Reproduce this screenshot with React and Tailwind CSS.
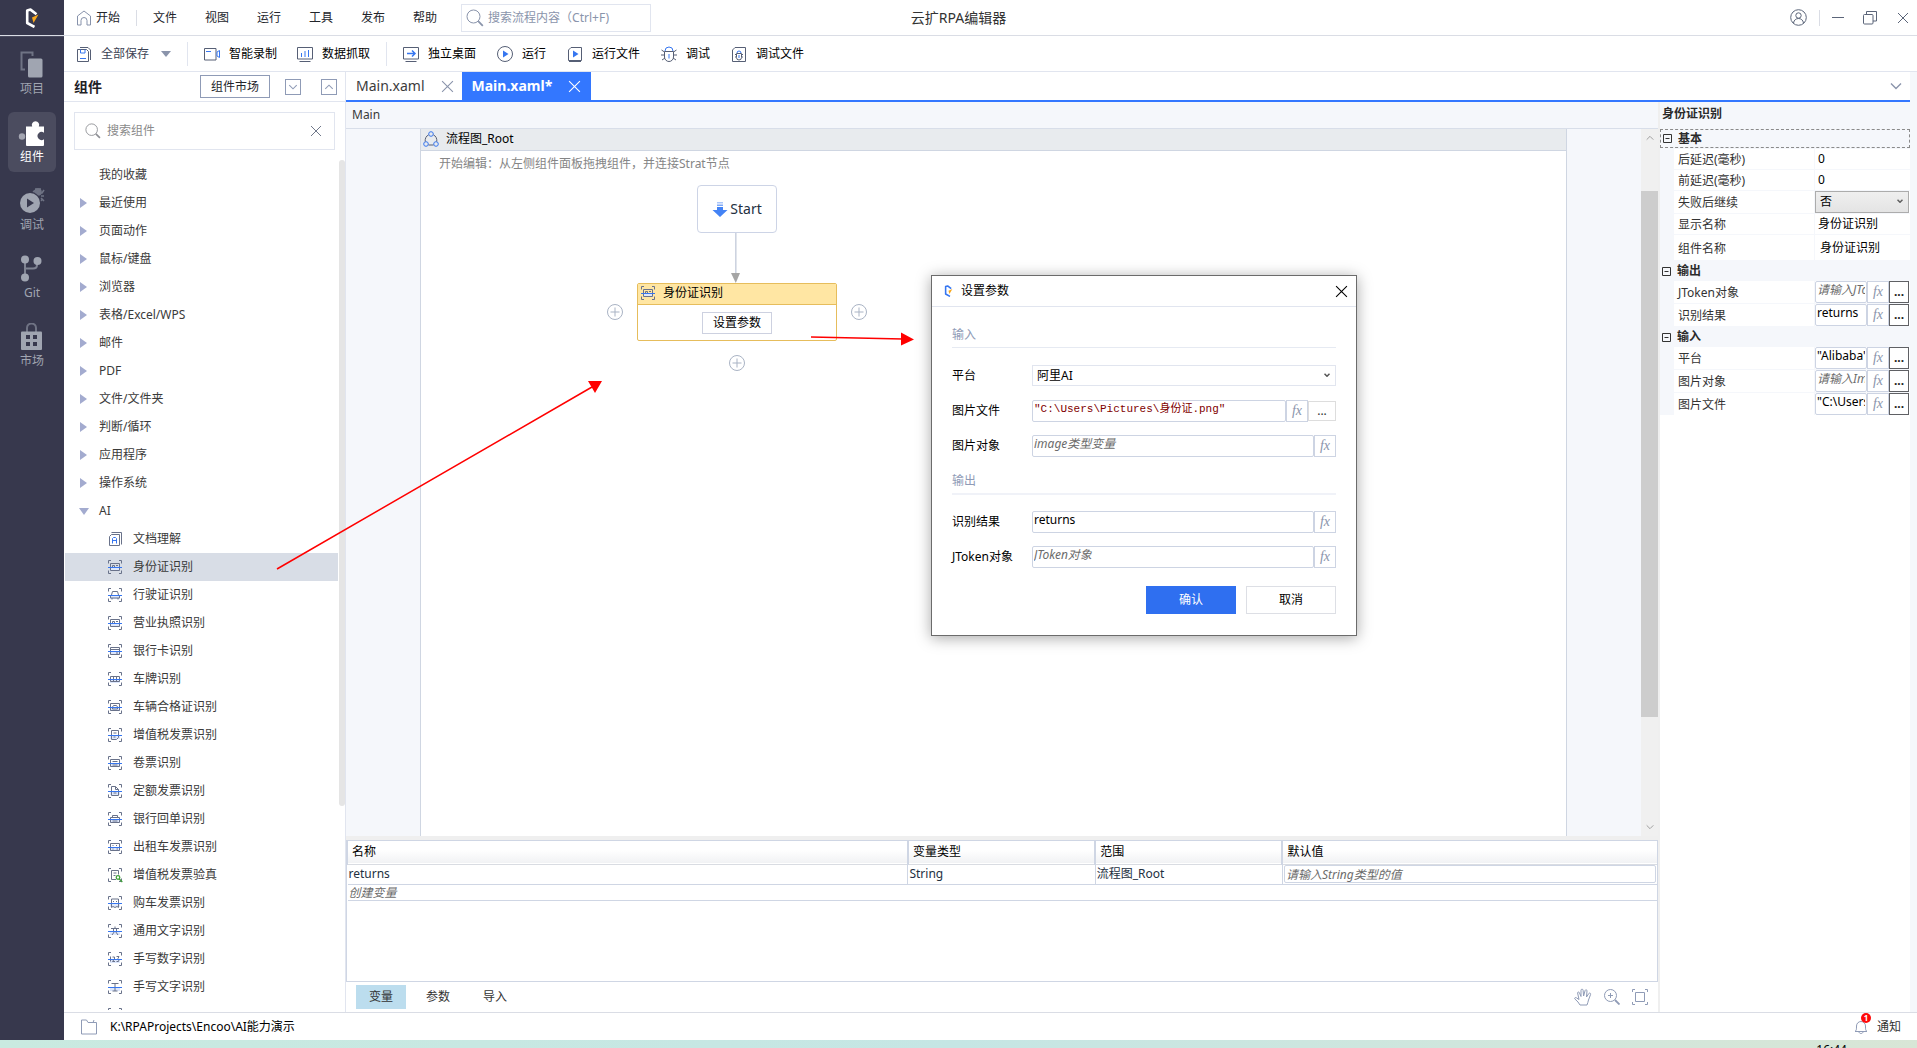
import { useState } from 'react'

const CATEGORIES = [
  { label: '我的收藏', leaf: true },
  { label: '最近使用' },
  { label: '页面动作' },
  { label: '鼠标/键盘' },
  { label: '浏览器' },
  { label: '表格/Excel/WPS' },
  { label: '邮件' },
  { label: 'PDF' },
  { label: '文件/文件夹' },
  { label: '判断/循环' },
  { label: '应用程序' },
  { label: '操作系统' },
  { label: 'AI', open: true },
]

const AI_ITEMS = [
  { label: '文档理解', icon: 'doc' },
  { label: '身份证识别', icon: 'card' },
  { label: '行驶证识别', icon: 'car' },
  { label: '营业执照识别', icon: 'card' },
  { label: '银行卡识别', icon: 'bank' },
  { label: '车牌识别', icon: 'plate' },
  { label: '车辆合格证识别', icon: 'cert' },
  { label: '增值税发票识别', icon: 'invoice' },
  { label: '卷票识别', icon: 'roll' },
  { label: '定额发票识别', icon: 'page' },
  { label: '银行回单识别', icon: 'receipt' },
  { label: '出租车发票识别', icon: 'taxi' },
  { label: '增值税发票验真', icon: 'verify' },
  { label: '购车发票识别', icon: 'ticket' },
  { label: '通用文字识别', icon: 'text' },
  { label: '手写数字识别', icon: 'digits' },
  { label: '手写文字识别', icon: 'hand' },
  { label: '', icon: 'page' },
]

const MENUS = ['文件', '视图', '运行', '工具', '发布', '帮助']

/* ---------- icons ---------- */

function Logo({ className, main, accent }) {
  return (
    <svg className={className} viewBox="0 0 14 20" fill="none">
      <path d="M9.500 19L2.200 15V2.500L5.500 1.600l6 4.600" stroke={main} strokeWidth="2.600" strokeLinejoin="round" />
      <path d="M13.500 6.500L7 9.600 8.500 15z" fill={accent} />
    </svg>
  )
}

function CloseIcon({ className, size = 12 }) {
  return (
    <svg className={className} width={size} height={size} viewBox="0 0 12 12" fill="none" stroke="currentColor">
      <path d="M1 1l10 10M11 1L1 11" />
    </svg>
  )
}

function Chevron({ className, up, bold }) {
  return (
    <svg className={className} viewBox="0 0 12 8" fill="none" stroke="currentColor" strokeWidth={bold ? 3 : 1.4}>
      <path d={up ? 'M1 6.5l5-5 5 5' : 'M1 1.5l5 5 5-5'} />
    </svg>
  )
}

function SearchIcon({ className }) {
  return (
    <svg className={className} viewBox="0 0 18 18" fill="none" stroke="currentColor">
      <circle cx="7.5" cy="7.5" r="6.5" />
      <path d="M12.2 12.2l4.6 4.6" strokeWidth="1.8" />
    </svg>
  )
}

const SCAN_SHAPES = {
  card: <path d="M3.500 4.500h9v7h-9zM5.500 8.500v-2h2v2M9 6.500h2" />,
  car: <path d="M3.500 8.500h9v2.500h-9zM4.500 8l1-3.500h5l1 3.500M5 11v1.500M11 11v1.500" />,
  bank: <path d="M3.500 4.500h9v7h-9zM3.500 6.500h9M9 10h2" />,
  plate: <path d="M3.500 5.500h9v5h-9zM6.500 5.500v5M9.500 5.500v5" />,
  cert: <path d="M3.500 4.500h9v7h-9zM5.500 10V8l1-1.500h3l1 1.500v2z" />,
  invoice: <path d="M4.500 3.500h7v7l-2 2h-5zM6.500 6h3M6.500 10h2" />,
  roll: <path d="M3.500 4.500h9v7h-9zM5.500 6.500h5M5.500 10h5" />,
  page: <path d="M4.500 3.500h4l3 3v6h-7zM8.500 3.500v3h3M6.500 10h3" />,
  receipt: <path d="M3.500 6.500h9v5h-9zM5.500 6.500v-2h5v2M5.500 10h5" />,
  taxi: <path d="M3.500 4.500h9v7h-9zM5.500 6.500h1M9 6.500h1M5.500 10h1M9.500 10h1.500" />,
  ticket: <path d="M4.500 4v8.500l1.500-1 2 1 2-1 1.500 1V4zM6 6.500h1M9 6.500h1" />,
  text: <path d="M4 5.500h8M8 3.500v2M6.500 6v2M9.500 6v2M5 12l2.500-3.500M11 12L8.500 8.500" />,
  digits: <path d="M3.500 5.500v5M5.500 6h2v2l-2 2.500h2.500M9.500 5.500h2.500L11 7.500l1 1-.5 2H9.500" />,
  hand: <path d="M4.500 4.500h7M8 4.500v7.500M5.500 12h5" />,
}

function ComponentIcon({ name, className = 'size-4' }) {
  if (name === 'doc') {
    return (
      <svg className={className} viewBox="0 0 16 16" fill="none">
        <path d="M4.500 1.500h10v12" stroke="#69728a" />
        <path d="M4.500 3.500h8v11h-10v-9z" stroke="#69728a" />
        <path d="M5.500 12.500V7.500l1-1h2l1 1v5M5.500 9.500h4" stroke="#3676f0" />
      </svg>
    )
  }
  return (
    <svg className={className} viewBox="0 0 16 16" fill="none" stroke="#69728a">
      <path d="M1.500 4.500v-3H4M12 1.500h2.500v3M14.500 11.500v3H12M4 14.500H1.500v-3" />
      {name === 'verify' ? (
        <>
          <path d="M9 12.500H4.500v-9h7v4M6.500 6h3M6.500 8.500h2" />
          <g stroke="#3fa13a" strokeWidth="1.300">
            <circle cx="11" cy="10.500" r="1.800" />
            <path d="M12.300 12l3 3" />
          </g>
        </>
      ) : (
        <>
          <rect x="3" y="9" width="10" height="3" fill="#dde7fc" stroke="none" />
          {SCAN_SHAPES[name]}
          <path d="M1 8.500h14" stroke="#3676f0" />
        </>
      )}
    </svg>
  )
}

const NAV = [
  {
    label: '项目',
    icon: (
      <>
        <path d="M6 18.500H2.500v-17h11V5" fill="none" stroke="#6f7384" strokeWidth="2" />
        <rect x="9" y="7.500" width="14.500" height="19" rx="1.500" fill="#a0a5b1" />
      </>
    ),
  },
  {
    label: '组件',
    active: true,
    icon: (
      <>
        <circle cx="3" cy="17.500" r="3.200" fill="#a3a5b1" />
        <path
          d="M7 7.500h6.200a3.700 3.700 0 1 1 6.600 0H25v6.300a4 4 0 1 0 0 6.400V26a1 1 0 0 1-1 1H8a1 1 0 0 1-1-1z"
          fill="#fff"
        />
      </>
    ),
  },
  {
    label: '调试',
    icon: (
      <>
        <g stroke="#6f7384" strokeWidth="1.600" fill="none">
          <path d="M14 5l3-2M25 3l-2 3h-3M25 14l-3-3M25 9h-3M16 2h6M21 14l2-1" />
          <circle cx="19" cy="5" r="3" fill="#6f7384" />
        </g>
        <circle cx="11" cy="16" r="11" fill="#37384d" />
        <circle cx="11" cy="16" r="10" fill="#a0a5b1" />
        <path d="M8 11.500v9l7-4.500z" fill="#37384d" />
      </>
    ),
  },
  {
    label: 'Git',
    icon: (
      <>
        <path d="M6 5v18M18 7v3c0 3-2 3.500-4 3.500H7" stroke="#7f8392" strokeWidth="2" fill="none" />
        <circle cx="6" cy="4.500" r="4" fill="#a0a5b1" />
        <circle cx="18.500" cy="6" r="4" fill="#a0a5b1" />
        <circle cx="6" cy="22.500" r="4" fill="#a0a5b1" />
      </>
    ),
  },
  {
    label: '市场',
    icon: (
      <>
        <path d="M8 9V5a4.500 4.500 0 0 1 9 0v4" stroke="#6f7384" strokeWidth="2" fill="none" />
        <rect x="2" y="8.500" width="21" height="18.500" rx="1" fill="#a0a5b1" />
        <path d="M7 12h4v4H7zM14 12h4v4h-4zM7 19h4v4H7zM14 19h4v4h-4z" fill="#37384d" />
      </>
    ),
  },
]

const TOOL_ICONS = {
  save: (
    <>
      <path d="M4 1.500h8l2.500 2.500v10" stroke="#565f75" />
      <path d="M1.500 3.500h9l2 2v10h-11z" stroke="#565f75" />
      <path d="M4.500 3.500v3.500h4.500V3.500M4 12.500h6" stroke="#3676f0" />
    </>
  ),
  record: (
    <>
      <path d="M.5 2.500h11.500v11.500H.5z" stroke="#565f75" />
      <path d="M2 5.500h5" stroke="#3676f0" />
      <path d="M13 6l2.500-1.500v7L13 10z" stroke="#3676f0" />
    </>
  ),
  data: (
    <>
      <path d="M.500 1.500h15v11.500H.500zM2.500 15.500h11" stroke="#565f75" />
      <path d="M4.500 7v4M8 5v6M11.500 4v7" stroke="#3676f0" />
    </>
  ),
  desktop: (
    <>
      <path d="M.500 1.500h15v11.500H.500zM2.500 15.500h11" stroke="#565f75" />
      <path d="M4 7.500h7.500M9 4.500l3 3-3 3" stroke="#3676f0" strokeWidth="1.500" />
    </>
  ),
  run: (
    <>
      <circle cx="8" cy="8" r="7.500" stroke="#565f75" />
      <path d="M6 4.500v7L11.500 8z" fill="#3676f0" />
    </>
  ),
  runFile: (
    <>
      <path d="M4 1.500h10.500v13h-13V4zM2 15.500h12" stroke="#565f75" />
      <path d="M6 4.500v7L11.500 8z" fill="#3676f0" />
    </>
  ),
  debug: (
    <>
      <path d="M3.500 5.500h9V11a4.500 4.500 0 0 1-9 0zM.500 4l3 2M15.500 4l-3 2M0 9h3.500M16 9h-3.500M1 14l3-2M15 14l-3-2" stroke="#565f75" />
      <path d="M4 5a4 4 0 0 1 8 0M8 8v4.500" stroke="#3676f0" />
    </>
  ),
  debugFile: (
    <>
      <path d="M4 1.500h10.500v14h-13V4zM5.500 7.500h5v4a2 2 0 0 1-5 0zM4 8.500h1M11 8.500h1M4 11h1M11 11h1" stroke="#565f75" />
      <path d="M6 7a2 2 0 0 1 4 0M8 9v3" stroke="#3676f0" />
    </>
  ),
}

function ToolButton({ icon, label, muted }) {
  return (
    <button className={`flex items-center gap-[9px] ${muted ? 'text-[#3b4254]' : 'text-black'}`}>
      <svg className="size-4" viewBox="0 0 16 16" fill="none">{TOOL_ICONS[icon]}</svg>
      {label}
    </button>
  )
}

/* ---------- shared fields ---------- */

function FxButton() {
  return (
    <button className="w-[22px] shrink-0 border border-[#cdd4e3] font-['Liberation_Serif',serif] text-sm leading-4 italic text-[#8a94ab]">
      fx
    </button>
  )
}

function ExprInput({ id, value, placeholder, code }) {
  return (
    <input
      id={id}
      defaultValue={value}
      placeholder={placeholder}
      className={`min-w-0 flex-1 rounded-xs border border-[#cdd4e3] bg-white px-px pb-1 outline-none placeholder:italic placeholder:text-[#6b6b6b] ${
        code ? "font-['Liberation_Mono','Noto_Sans_CJK_SC',monospace] text-[11px] text-[#7f0000]" : 'text-xs text-black'
      }`}
    />
  )
}

/* ---------- chrome ---------- */

function TitleBar() {
  return (
    <header className="grid h-9 shrink-0 grid-cols-[1fr_auto_1fr] items-stretch border-b border-[#dadde5]">
      <div className="flex items-center">
        <div className="flex h-full w-16 shrink-0 items-center justify-center bg-[#37384d]">
          <Logo className="h-5 w-3.5" main="#fff" accent="#f9a81c" />
        </div>
        <button className="flex items-center gap-1 pl-3 text-[#23252b]">
          <svg className="size-4" viewBox="0 0 16 16" fill="none" stroke="#8792ab">
            <path d="M1.500 15V6L8 1l6.500 5v9H11v-4.500a3 3 0 0 0-6 0V15z" />
          </svg>
          开始
        </button>
        <span className="mx-4 h-4 w-px bg-[#dadde5]" />
        <nav className="flex gap-7 text-[#23252b]">
          {MENUS.map(m => <button key={m}>{m}</button>)}
        </nav>
        <label className="ml-6 flex h-7 w-[190px] items-center gap-1 border border-[#e1e5ef] pl-1 text-[#8a94ab]">
          <SearchIcon className="size-[18px]" />
          <input
            aria-label="搜索流程内容"
            placeholder="搜索流程内容（Ctrl+F)"
            className="min-w-0 flex-1 outline-none placeholder:text-[#8a94ab]"
          />
        </label>
      </div>
      <h1 className="self-center text-sm text-[#333]">云扩RPA编辑器</h1>
      <div className="flex items-center justify-end text-[#5b6579]">
        <button aria-label="账户">
          <svg className="size-[17px]" viewBox="0 0 17 17" fill="none" stroke="currentColor">
            <circle cx="8.500" cy="8.500" r="7.800" />
            <circle cx="8.500" cy="6.500" r="2.700" />
            <path d="M3.500 14c.5-3 2.500-4.500 5-4.500s4.500 1.500 5 4.500" />
          </svg>
        </button>
        <span className="mx-3 h-4 w-px bg-[#dadde5]" />
        <button aria-label="最小化" className="h-4 w-3"><span className="block h-px bg-[#5b6579]" /></button>
        <button aria-label="还原" className="ml-[19px]">
          <svg className="size-3.5" viewBox="0 0 14 14" fill="none" stroke="currentColor">
            <rect x=".5" y="3.500" width="9.500" height="9.500" rx="1" />
            <path d="M3.500 3.500v-3H13.500v9.500H10" />
          </svg>
        </button>
        <button aria-label="关闭" className="mr-2 ml-5"><CloseIcon /></button>
      </div>
    </header>
  )
}

function SideNav() {
  return (
    <nav className="flex w-16 shrink-0 flex-col items-center gap-2 border-t border-[#4b4c60] bg-[#37384d] pt-[7px]">
      {NAV.map(n => (
        <button
          key={n.label}
          className={`flex h-[60px] w-12 flex-col items-center gap-0.5 rounded-md pt-[7px] ${
            n.active ? 'bg-[#4b4c5f] text-white' : 'text-[#a0a5b1]'
          }`}
        >
          <svg className="size-7" viewBox="-1 0 28 28">{n.icon}</svg>
          <span className="leading-4">{n.label}</span>
        </button>
      ))}
    </nav>
  )
}

function Toolbar() {
  return (
    <div className="flex h-9 shrink-0 items-center border-b border-[#e1e5ef] pl-3">
      <ToolButton icon="save" label="全部保存" muted />
      <svg className="ml-3 h-1.5 w-2.5" viewBox="0 0 10 6"><path d="M0 0h10L5 6z" fill="#8a94ab" /></svg>
      <span className="mx-4 h-6 w-px bg-[#e1e5ef]" />
      <div className="flex gap-5">
        <ToolButton icon="record" label="智能录制" />
        <ToolButton icon="data" label="数据抓取" />
      </div>
      <span className="mx-4 h-6 w-px bg-[#e1e5ef]" />
      <div className="flex gap-[21px]">
        <ToolButton icon="desktop" label="独立桌面" />
        <ToolButton icon="run" label="运行" />
        <ToolButton icon="runFile" label="运行文件" />
        <ToolButton icon="debug" label="调试" />
        <ToolButton icon="debugFile" label="调试文件" />
      </div>
    </div>
  )
}

function ComponentPanel() {
  const [selected, setSelected] = useState('身份证识别')

  return (
    <aside className="flex w-[282px] shrink-0 flex-col border-r border-[#e1e5ef]">
      <div className="flex h-[30px] shrink-0 items-center border-b border-[#e1e5ef] pr-2 pl-2.5">
        <h2 className="flex-1 text-sm font-bold text-[#1f2126]">组件</h2>
        <button className="h-[23px] w-[70px] border border-[#8f9bb6] text-[#23252b]">组件市场</button>
        <button aria-label="展开" className="ml-[15px] flex size-4 items-center justify-center border border-[#8f9bb6] text-[#8f9bb6]">
          <Chevron className="h-1.5 w-2.5" />
        </button>
        <button aria-label="收起" className="ml-5 flex size-4 items-center justify-center border border-[#8f9bb6] text-[#8f9bb6]">
          <Chevron className="h-1.5 w-2.5" up />
        </button>
      </div>

      <label className="mx-2.5 mt-2.5 flex h-[38px] shrink-0 items-center gap-1.5 border border-[#e1e5ef] pr-3 pl-2.5 text-[#8d8f94]">
        <SearchIcon className="size-4" />
        <input aria-label="搜索组件" placeholder="搜索组件" className="min-w-0 flex-1 outline-none placeholder:text-[#8a8a8a]" />
        <button aria-label="清空" className="text-[#70788a]"><CloseIcon /></button>
      </label>

      <div className="mt-2.5 mb-0.5 flex min-h-0 flex-1">
        <ul className="min-w-0 flex-1 overflow-hidden pt-px pl-px text-[#3a3a3a]">
          {CATEGORIES.map(c => (
            <li key={c.label}>
              <button className="flex h-7 w-full items-center pl-3.5">
                <span className="w-5">
                  {!c.leaf && (
                    <svg className="size-2.5" viewBox="0 0 10 10" fill="#a3abcf">
                      <path d={c.open ? 'M0 2h10L5 9z' : 'M1 0l7 5-7 5z'} />
                    </svg>
                  )}
                </span>
                {c.label}
              </button>
            </li>
          ))}
          {AI_ITEMS.map(item => (
            <li key={item.label}>
              <button
                onClick={() => setSelected(item.label)}
                className={`flex h-7 w-full items-center gap-2.5 pl-[42px] ${selected === item.label ? 'bg-[#d8dde6]' : ''}`}
              >
                <ComponentIcon name={item.icon} />
                {item.label}
              </button>
            </li>
          ))}
        </ul>
        <div className="w-[7px] pl-px">
          <div className="h-[76%] rounded-full bg-[#e5e5e5]" />
        </div>
      </div>
    </aside>
  )
}

function FileTabs() {
  return (
    <div className="flex h-[30px] shrink-0 border-b-2 border-[#3377ff] text-sm">
      <div className="flex items-center gap-4 pr-2 pl-2.5 text-[#3c3c3c]">
        <button>Main.xaml</button>
        <button aria-label="关闭 Main.xaml" className="text-[#8a94ab]"><CloseIcon size={13} /></button>
      </div>
      <div className="flex items-center gap-4 bg-[#3377ff] px-2.5 text-white">
        <button className="font-bold">Main.xaml*</button>
        <button aria-label="关闭 Main.xaml*"><CloseIcon size={13} /></button>
      </div>
      <button aria-label="更多标签" className="mr-2 ml-auto text-[#8a94ab]"><Chevron className="h-2 w-3" /></button>
    </div>
  )
}

/* ---------- canvas ---------- */

function AddHandle({ className }) {
  return (
    <button aria-label="添加" className={`absolute ${className}`}>
      <svg className="size-4" viewBox="0 0 16 16" fill="none" stroke="#a9b3c4">
        <circle cx="8" cy="8" r="7.500" />
        <path d="M8 3.500v9M3.500 8h9" />
      </svg>
    </button>
  )
}

function Canvas() {
  return (
    <div className="flex min-h-0 flex-1 bg-[#f5f7fb]">
      <div className="flex min-w-0 flex-1 px-[74px]">
        <section className="relative min-w-0 flex-1 border-x border-[#cfd6e2] bg-white">
          <div className="flex h-[22px] items-center gap-[7px] border-b border-[#cfd6e2] bg-[#e8ebee] pb-0.5 pl-0.5 text-black">
            <svg className="size-4" viewBox="0 0 16 16" fill="none" stroke="#3676f0">
              <circle cx="8" cy="3" r="2.300" />
              <circle cx="3" cy="13" r="2.300" />
              <circle cx="13" cy="13" r="2.300" />
              <path d="M5.500 4C3 5 2 7.500 2.200 10.500M10.500 4c2.500 1 3.500 3.500 3.300 6.500M5.500 14h5" stroke="#565f75" />
            </svg>
            流程图_Root
          </div>
          <p className="mt-[3px] pl-[18px] leading-5 text-[#858585]">开始编辑：从左侧组件面板拖拽组件，并连接Strat节点</p>

          <div className="absolute top-[56px] left-[276px] flex h-12 w-20 items-center justify-center gap-0.5 rounded border border-[#cdd4e6] bg-white text-sm text-[#23303f]">
            <svg className="size-4" viewBox="0 0 16 16" fill="#4483f5">
              <path d="M5 1h6v1.500H5z" opacity=".45" />
              <path d="M5 3.500h6V5H5z" opacity=".7" />
              <path d="M5 6h6v3h4.500L8 16 .5 9H5z" />
            </svg>
            Start
          </div>
          <svg className="absolute top-[104px] left-[309px] h-[50px] w-3" viewBox="0 0 12 50">
            <path d="M5 0h1.600v40H5z" fill="#cdd3e0" />
            <path d="M1 40h9L5.800 50z" fill="#a5a5a5" />
          </svg>

          <div className="absolute top-[154px] left-[216px] h-[58px] w-[200px] rounded-xs border border-[#e6bd5c] bg-white text-black">
            <div className="flex h-[21px] items-center gap-[7px] border-b border-[#e6bd5c] bg-[#ffe6a3] pb-0.5 pl-0.5">
              <ComponentIcon name="card" />
              身份证识别
            </div>
            <button className="mx-auto mt-[7px] block h-[22px] w-[70px] border border-[#cdd1e0]">设置参数</button>
          </div>
          <AddHandle className="top-[175px] left-[186px]" />
          <AddHandle className="top-[175px] left-[430px]" />
          <AddHandle className="top-[226px] left-[308px]" />
        </section>
      </div>
      <div className="flex w-[17px] flex-col items-center bg-[#f0f0f0] py-1.5 text-[#9a9a9a]">
        <Chevron className="h-1.5 w-2" up />
        <div className="mt-[50px] h-[526px] w-full bg-[#cdcdcd]" />
        <Chevron className="mt-auto h-1.5 w-2" />
      </div>
    </div>
  )
}

function VariableTable() {
  return (
    <div className="h-[142px] border border-[#cfd6e4] bg-white">
      <table className="w-full table-fixed border-collapse text-left">
        <colgroup>
          <col className="w-[42.8%]" />
          <col className="w-[14.3%]" />
          <col className="w-[14.3%]" />
          <col />
        </colgroup>
        <thead>
          <tr className="h-[23px] border-b border-[#d9dce2] bg-linear-to-b from-white from-40% to-[#f1f2f4] text-black">
            {['名称', '变量类型', '范围', '默认值'].map(h => (
              <th key={h} className="border-l-2 border-[#cfd6e4] px-1 py-0 font-normal first:border-l">{h}</th>
            ))}
          </tr>
        </thead>
        <tbody className="text-[#23303f]">
          <tr className="h-5 border-b border-[#cfd6e4]">
            <td className="px-px py-0">returns</td>
            <td className="border-l border-[#cfd6e4] px-px py-0">String</td>
            <td className="border-l border-[#cfd6e4] px-px py-0">流程图_Root</td>
            <td className="border-l border-[#cfd6e4] px-px py-0">
              <input
                aria-label="默认值"
                placeholder="请输入String类型的值"
                className="block h-[18px] w-full rounded-xs border border-[#cfd6e4] px-px outline-none placeholder:italic placeholder:text-[#6b6b6b]"
              />
            </td>
          </tr>
          <tr className="h-4 border-b border-[#cfd6e4]">
            <td colSpan={4} className="px-px py-0 leading-[15px] text-[#6b6b6b] italic">创建变量</td>
          </tr>
        </tbody>
      </table>
    </div>
  )
}

function BottomTabs() {
  const [tab, setTab] = useState('变量')

  return (
    <div className="flex h-[30px] shrink-0 items-center bg-white pr-2.5 pl-2.5">
      <div className="flex gap-[7px] text-[#333]">
        {['变量', '参数', '导入'].map(t => (
          <button key={t} onClick={() => setTab(t)} className={`h-6 w-[50px] ${tab === t ? 'bg-[#bcddee]' : ''}`}>
            {t}
          </button>
        ))}
      </div>
      <div className="ml-auto flex items-center gap-3 text-[#8f9bb6]">
        <button aria-label="拖动画布">
          <svg className="size-[18px]" viewBox="0 0 18 18" fill="none" stroke="currentColor">
            <path d="M6 17l-2-3-3.300-3.200c-.5-1 .8-1.600 1.700-1L5 11.500 3.600 5c0-1.200 1.400-1.400 1.800-.3L7 8.500 7 2.200C7 .8 9 .8 9.100 2.200L9.600 8l1.500-5.500c.4-1.200 2-.8 1.900.4L12.500 9l2.300-3.500c.7-1 2.200-.3 1.800.9L14.500 12c-.3 2-1 3-1.500 5z" />
          </svg>
        </button>
        <button aria-label="放大">
          <svg className="size-4" viewBox="0 0 16 16" fill="none" stroke="currentColor">
            <circle cx="6.500" cy="6.500" r="6" />
            <path d="M6.500 4v5M4 6.500h5" />
            <path d="M11 11l4.500 4.500" strokeWidth="1.800" />
          </svg>
        </button>
        <button aria-label="适应窗口">
          <svg className="size-4" viewBox="0 0 16 16" fill="none" stroke="currentColor">
            <path d="M3.500 3.500h9v9h-9zM.500 3V.500H3M13 .500h2.500V3M15.500 13v2.500H13M3 15.500H.500V13" />
          </svg>
        </button>
      </div>
    </div>
  )
}

/* ---------- properties ---------- */

function PropGroup({ title, focused }) {
  return (
    <div
      className={`flex items-center gap-1.5 pl-0.5 font-bold text-[#2b2b2b] ${
        focused ? 'mb-px h-[19px] border border-dashed border-[#8a8a8a]' : 'h-5'
      }`}
    >
      <svg className="size-[9px]" viewBox="0 0 9 9" fill="none" stroke="#333">
        <path d="M.5.5h8v8h-8zM2.500 4.500h4" />
      </svg>
      {title}
    </div>
  )
}

function PropRow({ id, label, height = 'h-[22px]', children }) {
  return (
    <div className={`mb-px ml-3.5 flex gap-px ${height}`}>
      <label htmlFor={id} className="flex w-[140px] items-center bg-white pt-0.5 pl-1 text-[#333]">{label}</label>
      <div className="flex min-w-0 flex-1 bg-white pr-px">{children}</div>
    </div>
  )
}

function PropExpr({ id, label, value, placeholder }) {
  return (
    <PropRow id={id} label={label}>
      <ExprInput id={id} value={value} placeholder={placeholder} />
      <FxButton />
      <button aria-label={`编辑${label}`} className="w-5 shrink-0 border border-[#5f6064] bg-white font-bold text-[#222]">...</button>
    </PropRow>
  )
}

const plainInput = 'min-w-0 flex-1 px-[3px] text-black outline-none'

function PropertyPanel() {
  return (
    <aside className="w-[252px] shrink-0 border-l-2 border-[#efefef] bg-white">
      <div className="bg-[#f5f7fb]">
        <h2 className="h-[27px] pl-0.5 leading-6 font-bold text-[#2b2b2b]">身份证识别</h2>
        <PropGroup title="基本" focused />
        <PropRow id="after" label="后延迟(毫秒)" height="h-5">
          <input id="after" defaultValue="0" className={plainInput} />
        </PropRow>
        <PropRow id="before" label="前延迟(毫秒)" height="h-5">
          <input id="before" defaultValue="0" className={plainInput} />
        </PropRow>
        <PropRow id="onfail" label="失败后继续">
          <div className="relative min-w-0 flex-1">
            <select id="onfail" className="h-full w-full appearance-none border border-[#acacac] bg-linear-to-b from-[#efefef] to-[#e4e4e4] pl-1 text-black">
              <option>否</option>
              <option>是</option>
            </select>
            <Chevron className="pointer-events-none absolute top-2 right-1.5 h-1 w-1.5 text-[#606060]" bold />
          </div>
        </PropRow>
        <PropRow id="display" label="显示名称" height="h-5">
          <input id="display" defaultValue="身份证识别" className={plainInput} />
        </PropRow>
        <PropRow id="name" label="组件名称" height="h-[25px]">
          <input id="name" defaultValue="身份证识别" className="min-w-0 flex-1 px-[5px] text-black outline-none" />
        </PropRow>
        <PropGroup title="输出" />
        <PropExpr id="out-jtoken" label="JToken对象" placeholder="请输入JToken类型的变量" />
        <PropExpr id="out-result" label="识别结果" value="returns" />
        <PropGroup title="输入" />
        <PropExpr id="in-platform" label="平台" value={'"Alibaba"'} />
        <PropExpr id="in-image" label="图片对象" placeholder="请输入Image类型的变量" />
        <PropExpr id="in-file" label="图片文件" value={'"C:\\Users\\Pictures\\身份证.png"'} />
      </div>
    </aside>
  )
}

/* ---------- dialog ---------- */

function DialogRow({ id, label, children }) {
  return (
    <div className="flex h-[22px]">
      <label htmlFor={id} className="flex w-20 items-center text-black">{label}</label>
      {children}
    </div>
  )
}

function ParamDialog() {
  return (
    <div
      role="dialog"
      aria-label="设置参数"
      className="absolute top-[275px] left-[931px] w-[426px] border border-[#6b6b6b] bg-white pb-[21px] shadow-[0_2px_14px_rgba(0,0,0,0.35)]"
    >
      <div className="flex h-[31px] items-center gap-2 border-b border-[#e1e5ef] pr-2 pl-3 text-black">
        <Logo className="h-3 w-[9px]" main="#3676f0" accent="#f9a81c" />
        <span className="flex-1">设置参数</span>
        <button aria-label="关闭对话框"><CloseIcon size={13} /></button>
      </div>
      <div className="px-5">
        <h3 className="mt-[18px] h-[23px] border-b border-[#e6eaf2] leading-5 text-[#8f9bb6]">输入</h3>
        <div className="mt-[17px] flex flex-col gap-[13px]">
          <DialogRow id="dlg-platform" label="平台">
            <div className="relative flex-1">
              <select id="dlg-platform" className="h-[21px] w-full appearance-none border border-[#e1e5ef] pl-1 text-black">
                <option>阿里AI</option>
                <option>百度AI</option>
              </select>
              <Chevron className="pointer-events-none absolute top-2 right-1.5 h-1 w-1.5 text-[#555]" bold />
            </div>
          </DialogRow>
          <DialogRow id="dlg-file" label="图片文件">
            <ExprInput id="dlg-file" value={'"C:\\Users\\Pictures\\身份证.png"'} code />
            <FxButton />
            <button aria-label="选择文件" className="my-px w-7 border border-[#dddddd] text-[#333]">...</button>
          </DialogRow>
          <DialogRow id="dlg-image" label="图片对象">
            <ExprInput id="dlg-image" placeholder="image类型变量" />
            <FxButton />
          </DialogRow>
        </div>
        <h3 className="mt-[14px] h-[24px] border-b-2 border-[#f0f2f8] leading-5 text-[#8f9bb6]">输出</h3>
        <div className="mt-4 flex flex-col gap-[13px]">
          <DialogRow id="dlg-result" label="识别结果">
            <ExprInput id="dlg-result" value="returns" />
            <FxButton />
          </DialogRow>
          <DialogRow id="dlg-jtoken" label="JToken对象">
            <ExprInput id="dlg-jtoken" placeholder="JToken对象" />
            <FxButton />
          </DialogRow>
        </div>
        <div className="mt-[18px] flex justify-end gap-2.5">
          <button className="h-7 w-[90px] bg-[#2f6ff0] text-white">确认</button>
          <button className="h-7 w-[90px] border border-[#dddfe5] text-black">取消</button>
        </div>
      </div>
    </div>
  )
}

function StatusBar() {
  return (
    <footer className="flex h-7 shrink-0 items-center border-t border-[#dadde5] pr-4 pl-4 text-black">
      <svg className="h-4 w-[18px]" viewBox="0 0 18 16" fill="none" stroke="#8f9bb6">
        <path d="M1.500 15V1h5l1.500 2.500h8.500V15zM8 3.500h5L14 1" />
      </svg>
      <span className="ml-3 flex-1">K:\RPAProjects\Encoo\AI能力演示</span>
      <button className="flex items-center gap-2 text-[#333]">
        <span className="relative">
          <svg className="size-4" viewBox="0 0 16 16" fill="none" stroke="#8f9bb6">
            <path d="M2 12.500h12c-1.500-1-1.500-2-1.500-5.500a4.500 4.500 0 0 0-9 0c0 3.500 0 4.500-1.500 5.500zM6 13c.3 2 3.700 2 4 0" />
          </svg>
          <span className="absolute -top-1.5 left-2 flex size-2.5 items-center justify-center rounded-full bg-[#ff0a0a] text-[8px] leading-none font-bold text-white">
            1
          </span>
        </span>
        通知
      </button>
    </footer>
  )
}

// Red guide arrows that lead from the list to the node and on to the dialog
function GuideArrows() {
  return (
    <svg className="pointer-events-none absolute inset-0 size-full" fill="none" stroke="#f00" strokeWidth="1.500">
      <path d="M277 569L592 387M811 337l92 2" />
      <path d="M602 381l-14 0 7 12zM914 339.500l-13-7v13z" fill="#f00" stroke="none" />
    </svg>
  )
}

export default function App() {
  return (
    <div
      lang="zh-CN"
      className="relative flex h-screen flex-col overflow-hidden bg-white font-['Noto_Sans','Noto_Sans_CJK_SC',sans-serif] text-xs"
    >
      <TitleBar />
      <div className="flex min-h-0 flex-1">
        <SideNav />
        <div className="flex min-w-0 flex-1 flex-col">
          <Toolbar />
          <div className="flex min-h-0 flex-1">
            <ComponentPanel />
            <main className="flex min-w-0 flex-1 flex-col">
              <FileTabs />
              <div className="flex min-h-0 flex-1">
                <div className="flex min-w-0 flex-1 flex-col">
                  <div className="h-[27px] shrink-0 border-b border-[#d8dee9] bg-[#f5f7fb] pl-1.5 leading-[26px] text-[#3a3a3a]">Main</div>
                  <Canvas />
                  <div className="h-1 shrink-0 bg-[#efefef]" />
                  <VariableTable />
                  <BottomTabs />
                </div>
                <PropertyPanel />
              </div>
            </main>
            <div className="w-[7px] shrink-0 bg-[#f5f7fb]" />
          </div>
          <StatusBar />
        </div>
      </div>
      <div className="flex h-2 shrink-0 justify-end overflow-hidden bg-linear-to-r from-[#c9eae0] via-[#c5e6e4] to-[#d8e6d6] pr-[70px]">
        <time className="pt-1 leading-none text-black">16:44</time>
      </div>
      <ParamDialog />
      <GuideArrows />
    </div>
  )
}
